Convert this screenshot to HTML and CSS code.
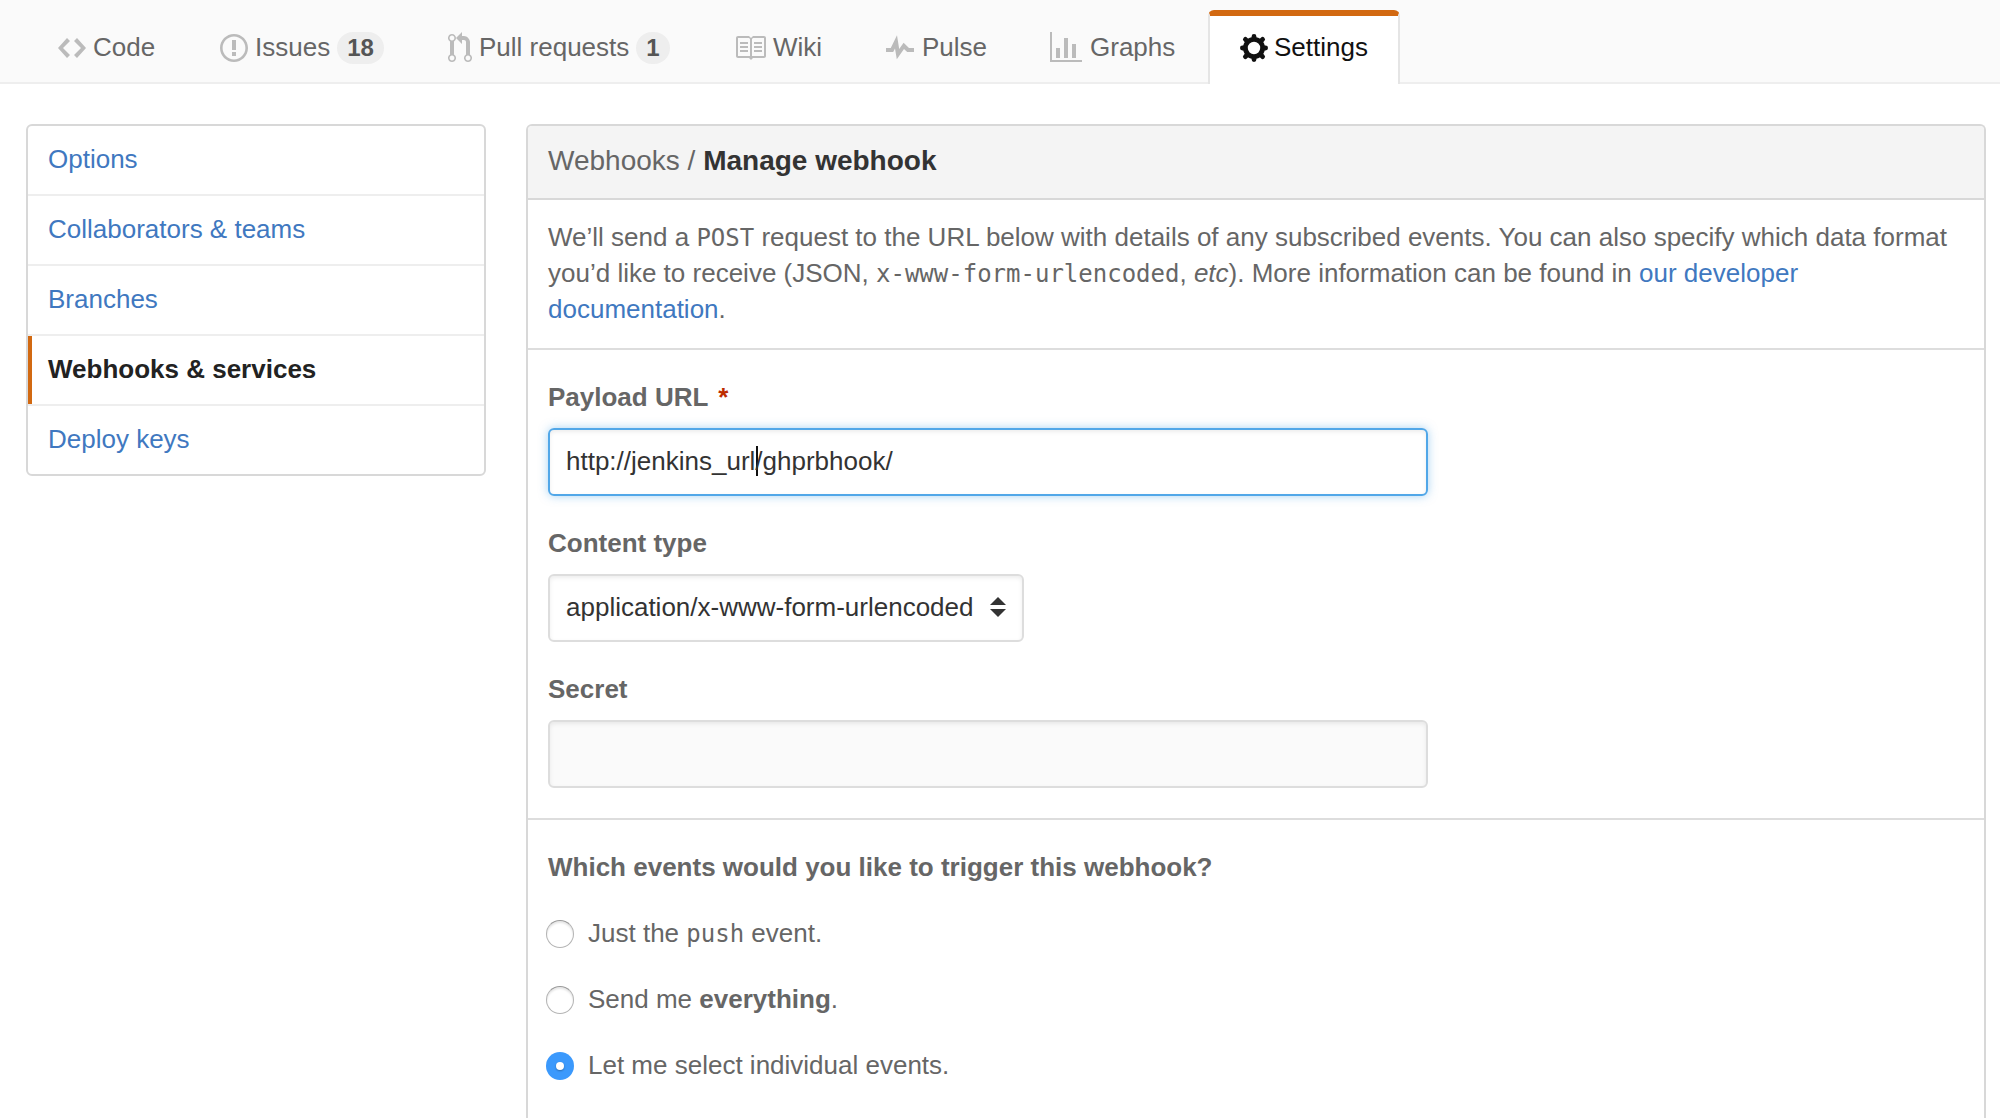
FILE: index.html
```html
<!DOCTYPE html>
<html lang="en">
<head>
<meta charset="utf-8">
<title>Manage webhook</title>
<link rel="stylesheet" href="styles.css">
</head>
<body>
<nav class="reponav">
  <a class="tab tab-code"><svg class="octicon" width="28" height="32" viewBox="0 0 14 16"><path d="M9.5 3L8 4.5 11.5 8 8 11.5 9.5 13 14 8 9.5 3zm-5 0L0 8l4.5 5L6 11.5 2.5 8 6 4.5 4.5 3z"/></svg><span class="name">Code</span></a>
  <a class="tab tab-issues"><svg class="octicon" width="28" height="32" viewBox="0 0 14 16"><path d="M7 2.3c3.14 0 5.7 2.56 5.7 5.7s-2.56 5.7-5.7 5.7A5.71 5.71 0 0 1 1.3 8c0-3.14 2.56-5.7 5.7-5.7zM7 1C3.14 1 0 4.14 0 8s3.14 7 7 7 7-3.14 7-7-3.14-7-7-7zm1 3H6v5h2V4zm0 6H6v2h2v-2z"/></svg><span class="name">Issues</span><span class="counter">18</span></a>
  <a class="tab tab-pulls"><svg class="octicon" width="24" height="32" viewBox="0 0 12 16"><path d="M11 11.28V5c-.03-.78-.34-1.47-.94-2.06C9.46 2.35 8.78 2.03 8 2H7V0L4 3l3 3V4h1c.27.02.48.11.69.31.21.2.3.42.31.69v6.28A1.993 1.993 0 0 0 10 15a1.993 1.993 0 0 0 1-3.72zm-1 2.92c-.66 0-1.2-.55-1.2-1.2 0-.65.55-1.2 1.2-1.2.65 0 1.2.55 1.2 1.2 0 .65-.55 1.2-1.2 1.2zM4 3c0-1.11-.89-2-2-2a1.993 1.993 0 0 0-1 3.72v6.56A1.993 1.993 0 0 0 2 15a1.993 1.993 0 0 0 1-3.72V4.72c.59-.34 1-.98 1-1.72zm-.8 10c0 .66-.55 1.2-1.2 1.2-.65 0-1.2-.55-1.2-1.2 0-.65.55-1.2 1.2-1.2.65 0 1.2.55 1.2 1.2zM2 4.2C1.34 4.2.8 3.65.8 3c0-.65.55-1.2 1.2-1.2.65 0 1.2.55 1.2 1.2 0 .65-.55 1.2-1.2 1.2z"/></svg><span class="name">Pull requests</span><span class="counter">1</span></a>
  <a class="tab tab-wiki"><svg class="octicon" width="32" height="32" viewBox="0 0 16 16"><path d="M3 5h4v1H3V5zm0 3h4V7H3v1zm0 2h4V9H3v1zm11-5h-4v1h4V5zm0 2h-4v1h4V7zm0 2h-4v1h4V9zm2-6v9c0 .55-.45 1-1 1H9.5l-1 1-1-1H2c-.55 0-1-.45-1-1V3c0-.55.45-1 1-1h5.5l1 1 1-1H15c.55 0 1 .45 1 1zm-8 .5L7.5 3H2v9h6V3.5zm7-.5H9.5l-.5.5V12h6V3z"/></svg><span class="name">Wiki</span></a>
  <a class="tab tab-pulse"><svg class="octicon" width="28" height="32" viewBox="0 0 14 16"><path d="M11.5 8L8.8 5.4 6.6 8.5 5.5 1.6 2.38 8H0v2h3.6l.9-1.8.9 5.4L9 8.5l1.6 1.5H14V8h-2.5z"/></svg><span class="name">Pulse</span></a>
  <a class="tab tab-graphs"><svg class="octicon" width="32" height="32" viewBox="0 0 16 16"><path d="M16 14v1H0V0h1v14h15zM5 13H3V8h2v5zm4 0H7V3h2v10zm4 0h-2V6h2v7z"/></svg><span class="name">Graphs</span></a>
  <a class="tab tab-settings selected"><svg class="octicon gear" width="28" height="32" viewBox="-14 -16 28 32"><circle r="8.6"/><path d="M0-10v-1.6M0 10v1.6M-10 0h-1.6M10 0h1.6M7-7l1.6-1.6M-7-7l-1.6-1.6M7 7l1.6 1.6M-7 7l-1.6 1.6"/></svg><span class="name">Settings</span></a>
</nav>
<div class="container">
  <aside class="menu">
    <a class="menu-item">Options</a>
    <a class="menu-item">Collaborators &amp; teams</a>
    <a class="menu-item">Branches</a>
    <a class="menu-item current">Webhooks &amp; services</a>
    <a class="menu-item">Deploy keys</a>
  </aside>
  <main class="box">
    <h1 class="box-header">Webhooks / <strong>Manage webhook</strong></h1>
    <p class="description">We’ll send a <code>POST</code> request to the URL below with details of any subscribed events. You can also specify which data format you’d like to receive (JSON, <code>x-www-form-urlencoded</code>, <em>etc</em>). More information can be found in <a class="link">our developer documentation</a>.</p>
    <section class="fields">
      <div class="label">Payload URL <span class="required">*</span></div>
      <div class="input focused">http://jenkins_url<span class="caret"></span>/ghprbhook/</div>
      <div class="label">Content type</div>
      <div class="input select">application/x-www-form-urlencoded<svg class="arrows" width="16" height="20" viewBox="0 0 16 20"><path d="M8 0l8 8H0zM0 12h16l-8 8z"/></svg></div>
      <div class="label">Secret</div>
      <div class="input empty"></div>
    </section>
    <section class="events">
      <div class="question">Which events would you like to trigger this webhook?</div>
      <div class="choice"><span class="radio"></span><span>Just the <code>push</code> event.</span></div>
      <div class="choice"><span class="radio"></span><span>Send me <strong>everything</strong>.</span></div>
      <div class="choice"><span class="radio checked"></span><span>Let me select individual events.</span></div>
    </section>
  </main>
</div>
</body>
</html>
```

FILE: styles.css
```css
* { box-sizing: border-box; }
body {
  display: flex;
  flex-direction: column;
  margin: 0;
  height: 1118px;
  background: #fff;
  color: #666;
  font: 26px/36px "Liberation Sans", Arial, sans-serif;
}
code { font-family: "DejaVu Sans Mono", monospace; font-size: 24px; line-height: 1; }

/* Repository tabs */
.reponav {
  display: flex;
  flex: none;
  height: 84px;
  padding: 10px 0 0 26px;
  background: #fafafa;
  border-bottom: 2px solid #eee;
}
.tab {
  display: flex;
  align-items: flex-start;
  height: 74px;
  padding: 22px 32px 0;
  line-height: 32px;
  white-space: nowrap;
}
.octicon { flex: none; fill: #bbb; }
.name { margin: -1px 0 0 7px; }
.tab-code { width: 162px; }
.tab-issues { width: 228px; }
.tab-pulls { width: 286px; }
.tab-wiki { width: 152px; }
.tab-pulse { width: 164px; }
.tab-graphs { width: 190px; }
.tab-settings { width: 192px; }
.tab-pulse .name, .tab-graphs .name { margin-left: 8px; }
.counter {
  height: 32px;
  margin-left: 7px;
  padding: 0 10px;
  border-radius: 16px;
  background: #eee;
  color: #555;
  font-size: 24px;
  font-weight: bold;
  line-height: 31px;
}
.selected {
  padding: 16px 30px 0;
  background: #fff;
  border: solid #e5e5e5;
  border-width: 6px 2px 0;
  border-top-color: #d26911;
  border-radius: 6px 6px 0 0;
  color: #111;
}
.selected .name { margin-left: 6px; }
.selected .gear { fill: none; stroke: #111; stroke-width: 4.8; stroke-linecap: round; }

.container {
  display: flex;
  flex: 1;
  min-height: 0;
  align-items: flex-start;
  gap: 40px;
  padding: 40px 14px 0 26px;
}

/* Settings menu */
.menu { width: 460px; border: 2px solid #d8d8d8; border-radius: 6px; }
.menu-item {
  display: block;
  height: 70px;
  padding: 15px 20px;
  border-bottom: 2px solid #eee;
  color: #4078c0;
}
.menu-item:last-child { height: 68px; border-bottom: 0; }
.current {
  color: #222;
  font-weight: bold;
  background: linear-gradient(#d26911, #d26911) 0 0 / 4px 68px no-repeat;
}

/* Webhook form */
.box {
  flex: 1;
  align-self: stretch;
  border: 2px solid #d8d8d8;
  border-bottom: 0;
  border-radius: 6px 6px 0 0;
}
.box-header {
  height: 74px;
  margin: 0;
  padding: 17px 20px 0;
  background: #f4f4f4;
  border-bottom: 2px solid #d8d8d8;
  border-radius: 4px 4px 0 0;
  font-size: 28px;
  font-weight: normal;
  line-height: 36px;
}
.box-header strong { color: #333; }
.description {
  height: 150px;
  margin: 0;
  padding: 19px 20px 0;
  border-bottom: 2px solid #ddd;
}
.link { color: #4078c0; }
.fields { height: 470px; padding: 29px 20px 0; border-bottom: 2px solid #ddd; }
.label { height: 49px; font-weight: bold; }
.required { margin-left: 3px; color: #bd2c00; }
.input {
  display: flex;
  align-items: center;
  width: 880px;
  height: 68px;
  margin-bottom: 29px;
  padding: 0 16px 2px;
  border: 2px solid #ddd;
  border-radius: 6px;
  box-shadow: inset 0 2px 4px rgba(0, 0, 0, .075);
  color: #333;
}
.focused {
  border-color: #51a7e8;
  box-shadow: inset 0 2px 4px rgba(0, 0, 0, .075), 0 0 10px rgba(81, 167, 232, .5);
}
.caret { width: 2px; height: 30px; margin: 0 -3px 0 1px; background: #111; }
.select { width: 476px; justify-content: space-between; }
.arrows { fill: #333; }
.empty { background: #fafafa; }
.events { padding: 29px 20px 0; }
.question { height: 66px; font-weight: bold; }
.choice { display: flex; gap: 14px; height: 66px; margin-left: -2px; }
.choice:last-child { height: 40px; }
.radio {
  display: flex;
  align-items: center;
  justify-content: center;
  width: 28px;
  height: 28px;
  margin-top: 5px;
  border: 1px solid #b4b4b4;
  border-top-color: #999;
  border-radius: 50%;
  box-shadow: inset 0 2px 2px rgba(0, 0, 0, .1);
}
.checked { border: 0; background: #3b99fc; box-shadow: none; }
.checked::after {
  content: "";
  width: 8px;
  height: 8px;
  border-radius: 50%;
  background: #fff;
  box-shadow: 0 1px 2px rgba(0, 0, 0, .3);
}
```
